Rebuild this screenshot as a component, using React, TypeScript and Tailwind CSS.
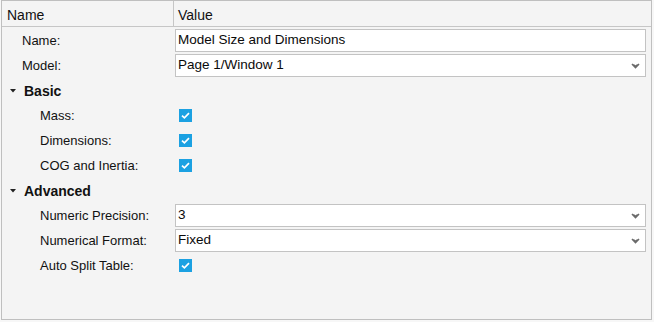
import React from "react";

const font = { fontFamily: '"Liberation Sans", Arial, sans-serif' };

function Chevron() {
  return (
    <svg width="9" height="7" viewBox="0 0 9 7" className="absolute right-[5px] top-[8px]">
      <path d="M1 1 L4.5 4.5 L8 1" stroke="#6b6b6b" strokeWidth="1.6" fill="none" />
      <path d="M2.5 1.5 L4.5 3.5 L6.5 1.5" stroke="#6b6b6b" strokeWidth="1.2" fill="none" />
    </svg>
  );
}

function Check() {
  return (
    <div className="w-[13px] h-[13px] bg-[#1ba1e2] flex items-center justify-center">
      <svg width="9" height="7" viewBox="0 0 9 7">
        <path d="M1 3.6 L3.4 5.8 L8 1.2" stroke="#ffffff" strokeWidth="1.7" fill="none" />
      </svg>
    </div>
  );
}

function Row({ label, indent, children }: { label: string; indent: string; children: React.ReactNode }) {
  return (
    <div className="flex h-[25px] items-center">
      <div className={`w-[173px] text-[13px] text-[#111] pt-[1px] ${indent}`}>{label}</div>
      <div className="flex-1 pr-[5px] flex items-center">{children}</div>
    </div>
  );
}

function TextBox({ value, select }: { value: string; select?: boolean }) {
  return (
    <div className="relative w-full h-[23px] bg-white border border-[#c3c3c3] flex items-center pl-[2px] text-[13.5px] text-[#0a0a0a]">
      {value}
      {select && <Chevron />}
    </div>
  );
}

function Section({ title }: { title: string }) {
  return (
    <div className="flex h-[25px] items-center pt-[1px]">
      <svg width="6" height="4" viewBox="0 0 6 4" className="ml-[8px] mr-[8px]">
        <path d="M0 0 L6 0 L3 3.5 Z" fill="#222" />
      </svg>
      <span className="text-[14px] font-bold text-[#111]">{title}</span>
    </div>
  );
}

export default function App() {
  return (
    <div className="w-[654px] h-[322px] bg-[#f7f7f7]" style={font}>
      <div className="ml-px w-[651px] h-[320px] bg-[#f4f4f4] border border-[#bfbfbf] flex flex-col">
        <div className="flex h-[26px] border-b border-[#c6c6c6] text-[14px] text-[#111]">
          <div className="w-[172px] border-r border-[#c6c6c6] pl-[5px] pt-[3px] flex items-center">Name</div>
          <div className="flex-1 pl-[4px] pt-[3px] flex items-center">Value</div>
        </div>
        <div className="pt-[1px] flex flex-col">
          <Row label="Name:" indent="pl-[20px]">
            <TextBox value="Model Size and Dimensions" />
          </Row>
          <Row label="Model:" indent="pl-[20px]">
            <TextBox value="Page 1/Window 1" select />
          </Row>
          <Section title="Basic" />
          <Row label="Mass:" indent="pl-[38px]">
            <div className="pl-[4px]"><Check /></div>
          </Row>
          <Row label="Dimensions:" indent="pl-[38px]">
            <div className="pl-[4px]"><Check /></div>
          </Row>
          <Row label="COG and Inertia:" indent="pl-[38px]">
            <div className="pl-[4px]"><Check /></div>
          </Row>
          <Section title="Advanced" />
          <Row label="Numeric Precision:" indent="pl-[38px]">
            <TextBox value="3" select />
          </Row>
          <Row label="Numerical Format:" indent="pl-[38px]">
            <TextBox value="Fixed" select />
          </Row>
          <Row label="Auto Split Table:" indent="pl-[38px]">
            <div className="pl-[4px]"><Check /></div>
          </Row>
        </div>
      </div>
    </div>
  );
}
